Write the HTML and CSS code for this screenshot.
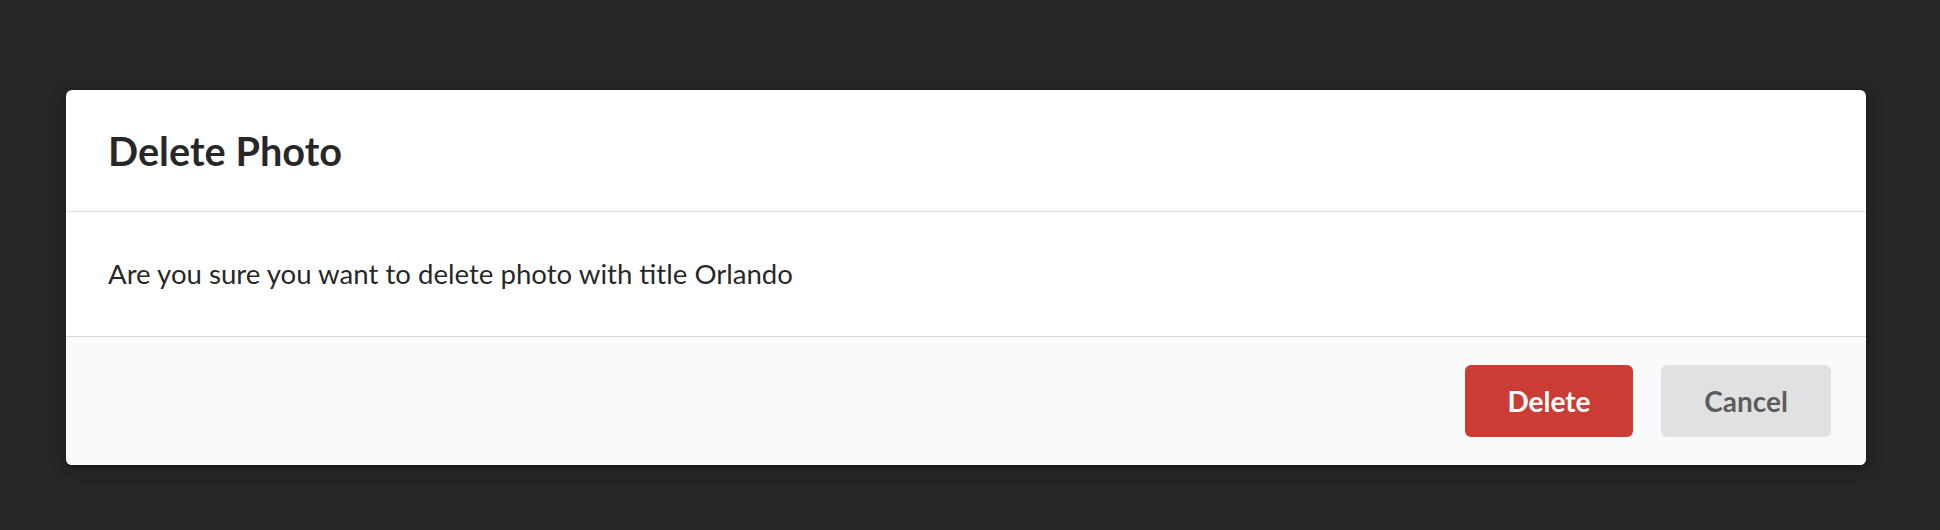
FILE: index.html
```html
<!DOCTYPE html>
<html>
<head>
<meta charset="utf-8">
<link rel="stylesheet" href="styles.css">
</head>
<body>
<div class="dimmer">
  <div class="modal">
    <div class="header">Delete Photo</div>
    <div class="content">Are you sure you want to delete photo with title Orlando</div>
    <div class="actions">
      <button class="button red">Delete</button>
      <button class="button grey">Cancel</button>
    </div>
  </div>
</div>
</body>
</html>
```

FILE: styles.css
```css
html, body {
  margin: 0;
  padding: 0;
  background: #262626;
  font-family: Lato, "Helvetica Neue", Arial, sans-serif;
}
.dimmer {
  width: 1940px;
  height: 530px;
  padding: 90px 0 0 66px;
  box-sizing: border-box;
}
.modal {
  width: 1800px;
  background: #fff;
  border-radius: 6px;
  overflow: hidden;
  box-shadow: 1px 3px 3px 0 rgba(0,0,0,.2), 1px 3px 15px 2px rgba(0,0,0,.2);
}
.header {
  padding: 35px 42px;
  font-size: 39.7px;
  line-height: 51px;
  font-weight: 700;
  color: rgba(0,0,0,.85);
  border-bottom: 1px solid rgba(34,36,38,.15);
}
.content {
  padding: 42px;
  font-size: 27.6px;
  line-height: 40px;
  color: rgba(0,0,0,.87);
}
.actions {
  background: #F9FAFB;
  border-top: 1px solid rgba(34,36,38,.15);
  padding: 28px 28px;
  display: flex;
  justify-content: flex-end;
}
.button {
  font-family: Lato, "Helvetica Neue", Arial, sans-serif;
  font-size: 28px;
  font-weight: 700;
  line-height: 28px;
  padding: 22px 0;
  border: none;
  border-radius: 6px;
  margin: 0 7px 0 21px;
  cursor: pointer;
}
.red {
  background: #CB3C34;
  color: #fff;
  width: 168px;
}
.grey {
  background: #E0E1E2;
  color: rgba(0,0,0,.6);
  width: 170px;
}
```
